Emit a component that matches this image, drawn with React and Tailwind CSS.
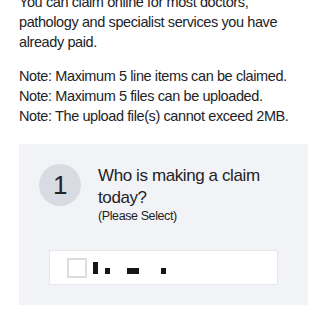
import React from 'react';

export default function App() {
  const notes = [
    'Note: Maximum 5 line items can be claimed.',
    'Note: Maximum 5 files can be uploaded.',
    'Note: The upload file(s) cannot exceed 2MB.',
  ];

  return (
    <div
      className="w-[320px] h-[320px] overflow-hidden bg-white text-[#222326] tracking-[-0.4px]"
      style={{ fontFamily: '"Liberation Sans", Arial, sans-serif' }}
    >
      <div className="mt-[-8px] pl-[19px] pr-[12px]">
        {/* Intro */}
        <p className="text-[14.5px] leading-[20px]">
          You can claim online for most doctors,
          <br />
          pathology and specialist services you have
          <br />
          already paid.
        </p>

        {/* Notes */}
        <div className="mt-[14px] text-[14.5px] leading-[20px] whitespace-nowrap">
          {notes.map(n => (
            <p key={n}>{n}</p>
          ))}
        </div>

        {/* Step card */}
        <div className="mt-[18px] bg-[#f2f3f6] pt-[20px] pb-[20px]">
          <div className="flex items-start pl-[20px] pr-3">
            <div className="w-[42px] h-[42px] shrink-0 rounded-full bg-[#d9dbe2] flex items-center justify-center text-[26px] text-[#222326]">
              1
            </div>
            <div className="ml-[17px] pt-[1px]">
              <p className="text-[17px] leading-[22px]">
                Who is making a claim
                <br />
                today?
              </p>
              <p className="text-[12.5px] leading-[16px] mt-[-1px]">(Please Select)</p>
            </div>
          </div>

          <div className="mt-[26px] mx-[30px] h-[35px] bg-white border border-[#e6e7ea] flex items-center pl-[17px]">
            <div className="w-[20px] h-[20px] border-2 border-[#dcdde0] bg-white" />
            <div className="ml-[6px] flex items-end h-[13px]">
              <div className="w-[5px] h-[12px] bg-[#15161a]" />
              <div className="ml-[7px] w-[5px] h-[6px] bg-[#15161a]" />
              <div className="ml-[17px] w-[12px] h-[6px] bg-[#15161a]" />
              <div className="ml-[22px] w-[5px] h-[6px] bg-[#15161a]" />
            </div>
          </div>
        </div>
      </div>
    </div>
  );
}
